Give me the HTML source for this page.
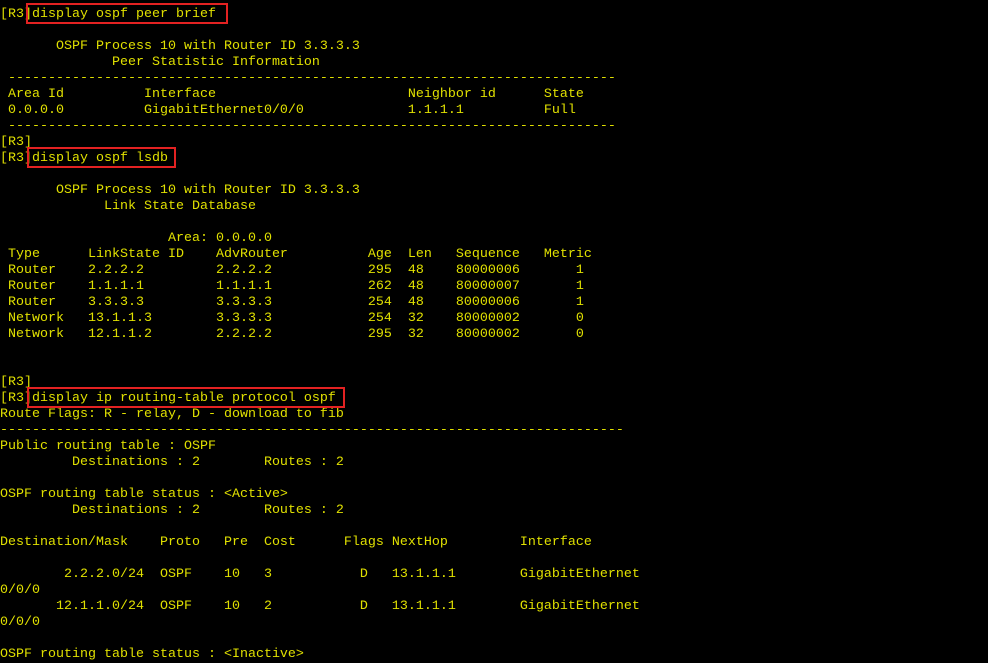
<!DOCTYPE html>
<html><head><meta charset="utf-8"><style>
html,body{margin:0;padding:0;background:#000;width:988px;height:661px;overflow:hidden}
pre{margin:0;position:absolute;left:0;top:7px;font-family:"Liberation Mono",monospace;font-size:13.33px;line-height:16px;color:#e0e000;white-space:pre}
.b{position:absolute;border:2px solid #e32222;box-sizing:border-box}
</style></head><body>
<pre>[R3]display ospf peer brief

       OSPF Process 10 with Router ID 3.3.3.3
              Peer Statistic Information
 ----------------------------------------------------------------------------
 Area Id          Interface                        Neighbor id      State
 0.0.0.0          GigabitEthernet0/0/0             1.1.1.1          Full
 ----------------------------------------------------------------------------
[R3]
[R3]display ospf lsdb

       OSPF Process 10 with Router ID 3.3.3.3
             Link State Database

                     Area: 0.0.0.0
 Type      LinkState ID    AdvRouter          Age  Len   Sequence   Metric
 Router    2.2.2.2         2.2.2.2            295  48    80000006       1
 Router    1.1.1.1         1.1.1.1            262  48    80000007       1
 Router    3.3.3.3         3.3.3.3            254  48    80000006       1
 Network   13.1.1.3        3.3.3.3            254  32    80000002       0
 Network   12.1.1.2        2.2.2.2            295  32    80000002       0


[R3]
[R3]display ip routing-table protocol ospf
Route Flags: R - relay, D - download to fib
------------------------------------------------------------------------------
Public routing table : OSPF
         Destinations : 2        Routes : 2

OSPF routing table status : &lt;Active&gt;
         Destinations : 2        Routes : 2

Destination/Mask    Proto   Pre  Cost      Flags NextHop         Interface

        2.2.2.0/24  OSPF    10   3           D   13.1.1.1        GigabitEthernet
0/0/0
       12.1.1.0/24  OSPF    10   2           D   13.1.1.1        GigabitEthernet
0/0/0

OSPF routing table status : &lt;Inactive&gt;
</pre>
<div class="b" style="left:26px;top:3px;width:202px;height:21px"></div>
<div class="b" style="left:27px;top:147px;width:149px;height:21px"></div>
<div class="b" style="left:27px;top:387px;width:318px;height:21px"></div>
</body></html>
